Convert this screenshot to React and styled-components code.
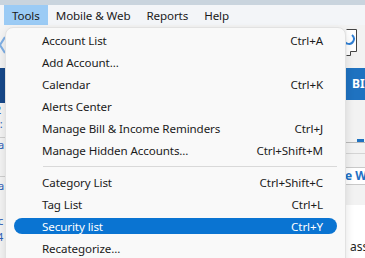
import React from 'react';
import styled, { createGlobalStyle } from 'styled-components';

const GlobalStyle = createGlobalStyle`
html, body {
margin: 0;
padding: 0;
width: 365px;
height: 258px;
overflow: hidden;
background: #f3f3f3;
font-family: "Segoe UI", "Noto Sans", "Open Sans", sans-serif;
}
`;

const Page = styled.div`
position: relative;
width: 365px;
height: 258px;
overflow: hidden;
display: flex;
flex-direction: column;
`;

const TitleStrip = styled.div`
height: 5px;
background: #c9d4de;
`;

const MenuBar = styled.div`
height: 20px;
background: #f3f5f8;
display: flex;
align-items: stretch;
padding-left: 4px;
`;

const MenuBarItem = styled.div`
display: flex;
align-items: center;
padding: 0 8px;
font-size: 11.6px;
letter-spacing: -0.1px;
color: #1b1b1b;
background: ${p => (p.active ? '#9bcbf5' : 'transparent')};
white-space: nowrap;
`;

const Workspace = styled.div`
flex: 1;
display: flex;
background: #f3f3f3;
`;

const LeftRail = styled.div`
width: 5px;
overflow: hidden;
display: flex;
flex-direction: column;
background: #f4f4f4;
`;

const Chevron = styled.div`
height: 32px;
padding-top: 10px;
box-sizing: border-box;
`;

const NavyBand = styled.div`
height: 35px;
margin-top: 11px;
background: #17498a;
`;

const RailText = styled.div`
height: ${p => p.h || 16}px;
font-size: 11px;
line-height: ${p => p.h || 16}px;
color: #2c5fb8;
margin-left: ${p => p.shift || -3}px;
white-space: nowrap;
overflow: hidden;
border-bottom: ${p => (p.rule ? '1px solid #cfcfcf' : 'none')};
`;

const Middle = styled.div`
flex: 1;
`;

const RightPane = styled.div`
width: 19px;
overflow: hidden;
display: flex;
flex-direction: column;
background: #f2f2f2;
`;

const DocIcon = styled.div`
height: 43px;
padding-top: 4px;
box-sizing: border-box;
`;

const BlueButton = styled.div`
height: 32px;
background: #1f72c0;
color: #fff;
font-weight: 700;
font-size: 12px;
line-height: 32px;
padding-left: 6px;
white-space: nowrap;
`;

const TabStrip = styled.div`
margin-top: 42px;
height: 10px;
border-top: 1px solid #b9b9b9;
border-bottom: 1px solid #d4d4d4;
position: relative;
`;

const TabMarker = styled.div`
position: absolute;
left: 11px;
top: -4px;
width: 7px;
height: 3px;
background: #1f72c0;
`;

const TabBox = styled.div`
margin-top: 13px;
height: 16px;
border: 1px solid #c9c9c9;
border-right: none;
background: #fff;
color: #2170c4;
font-weight: 700;
font-size: 12px;
line-height: 16px;
margin-left: -2px;
white-space: nowrap;
`;

const WhiteArea = styled.div`
margin-top: 20px;
flex: 1;
background: #fff;
display: flex;
align-items: flex-end;
padding-bottom: 3px;
padding-left: 4px;
font-size: 12px;
color: #222;
white-space: nowrap;
`;

const Dropdown = styled.div`
position: absolute;
left: 5px;
top: 27px;
width: 341px;
height: 250px;
box-sizing: border-box;
background: #f9f9f9;
border: 1px solid #e2e2e2;
border-radius: 8px;
box-shadow: 0 4px 10px rgba(0, 0, 0, 0.12);
padding-top: 1px;
display: flex;
flex-direction: column;
`;

const Row = styled.div`
height: 22px;
display: flex;
align-items: center;
`;

const RowInner = styled.div`
flex: 1;
margin: 0 8px;
height: 16px;
display: flex;
align-items: center;
justify-content: space-between;
padding: 0 14px 0 28px;
border-radius: 8px;
font-size: 11.6px;
letter-spacing: -0.1px;
color: ${p => (p.active ? '#ffffff' : '#1b1b1b')};
background: ${p => (p.active ? '#0a74d2' : 'transparent')};
white-space: nowrap;
`;

const Separator = styled.div`
height: 10px;
display: flex;
align-items: center;
padding: 0 8px 0 37px;
&::after {
  content: '';
  flex: 1;
  height: 1px;
  background: #d9d9d9;
}
`;

const topItems = [
  ['Account List', 'Ctrl+A'],
  ['Add Account...', ''],
  ['Calendar', 'Ctrl+K'],
  ['Alerts Center', ''],
  ['Manage Bill & Income Reminders', 'Ctrl+J'],
  ['Manage Hidden Accounts...', 'Ctrl+Shift+M'],
];

const bottomItems = [
  ['Category List', 'Ctrl+Shift+C'],
  ['Tag List', 'Ctrl+L'],
  ['Security list', 'Ctrl+Y', true],
  ['Recategorize...', ''],
];

const MenuRow = ({ label, shortcut, active }) => (
  <Row>
    <RowInner active={active}>
      <span>{label}</span>
      <span>{shortcut}</span>
    </RowInner>
  </Row>
);

const App = () => {
  return (
    <Page>
      <GlobalStyle />
      <TitleStrip />
      <MenuBar>
        <MenuBarItem active>Tools</MenuBarItem>
        <MenuBarItem>Mobile &amp; Web</MenuBarItem>
        <MenuBarItem>Reports</MenuBarItem>
        <MenuBarItem>Help</MenuBarItem>
      </MenuBar>
      <Workspace>
        <LeftRail>
          <Chevron>
            <svg width="5" height="20" viewBox="0 0 5 20">
              <path d="M5 2 L0 10 L5 18" fill="none" stroke="#7fb0e6" strokeWidth="2" />
            </svg>
          </Chevron>
          <NavyBand />
          <RailText h={14} shift={-5}>2</RailText>
          <RailText h={14} shift={-3}>l:</RailText>
          <RailText h={6} rule />
          <RailText h={14} shift={-2}>a</RailText>
          <RailText h={24} rule />
          <RailText h={18} shift={-2}>a</RailText>
          <RailText h={18} shift={0}>'</RailText>
          <RailText h={16} shift={-2}>c</RailText>
          <RailText h={16} shift={-3}>4</RailText>
        </LeftRail>
        <Middle />
        <RightPane>
          <DocIcon>
            <svg width="19" height="28" viewBox="0 0 19 28">
              <path d="M0.5 0.5 H10.5 V22.5 H4.5 V26.5 H0.5" fill="#fff" stroke="#444" strokeWidth="1" />
              <path d="M-2 9 A5 5 0 1 0 6 6" fill="none" stroke="#2f7fd4" strokeWidth="2" />
            </svg>
          </DocIcon>
          <BlueButton>BILL</BlueButton>
          <TabStrip>
            <TabMarker />
          </TabStrip>
          <TabBox>e WI</TabBox>
          <WhiteArea>ass</WhiteArea>
        </RightPane>
      </Workspace>
      <Dropdown>
        {topItems.map(([l, s]) => (
          <MenuRow key={l} label={l} shortcut={s} />
        ))}
        <Separator />
        {bottomItems.map(([l, s, a]) => (
          <MenuRow key={l} label={l} shortcut={s} active={a} />
        ))}
      </Dropdown>
    </Page>
  );
};

export default App;
